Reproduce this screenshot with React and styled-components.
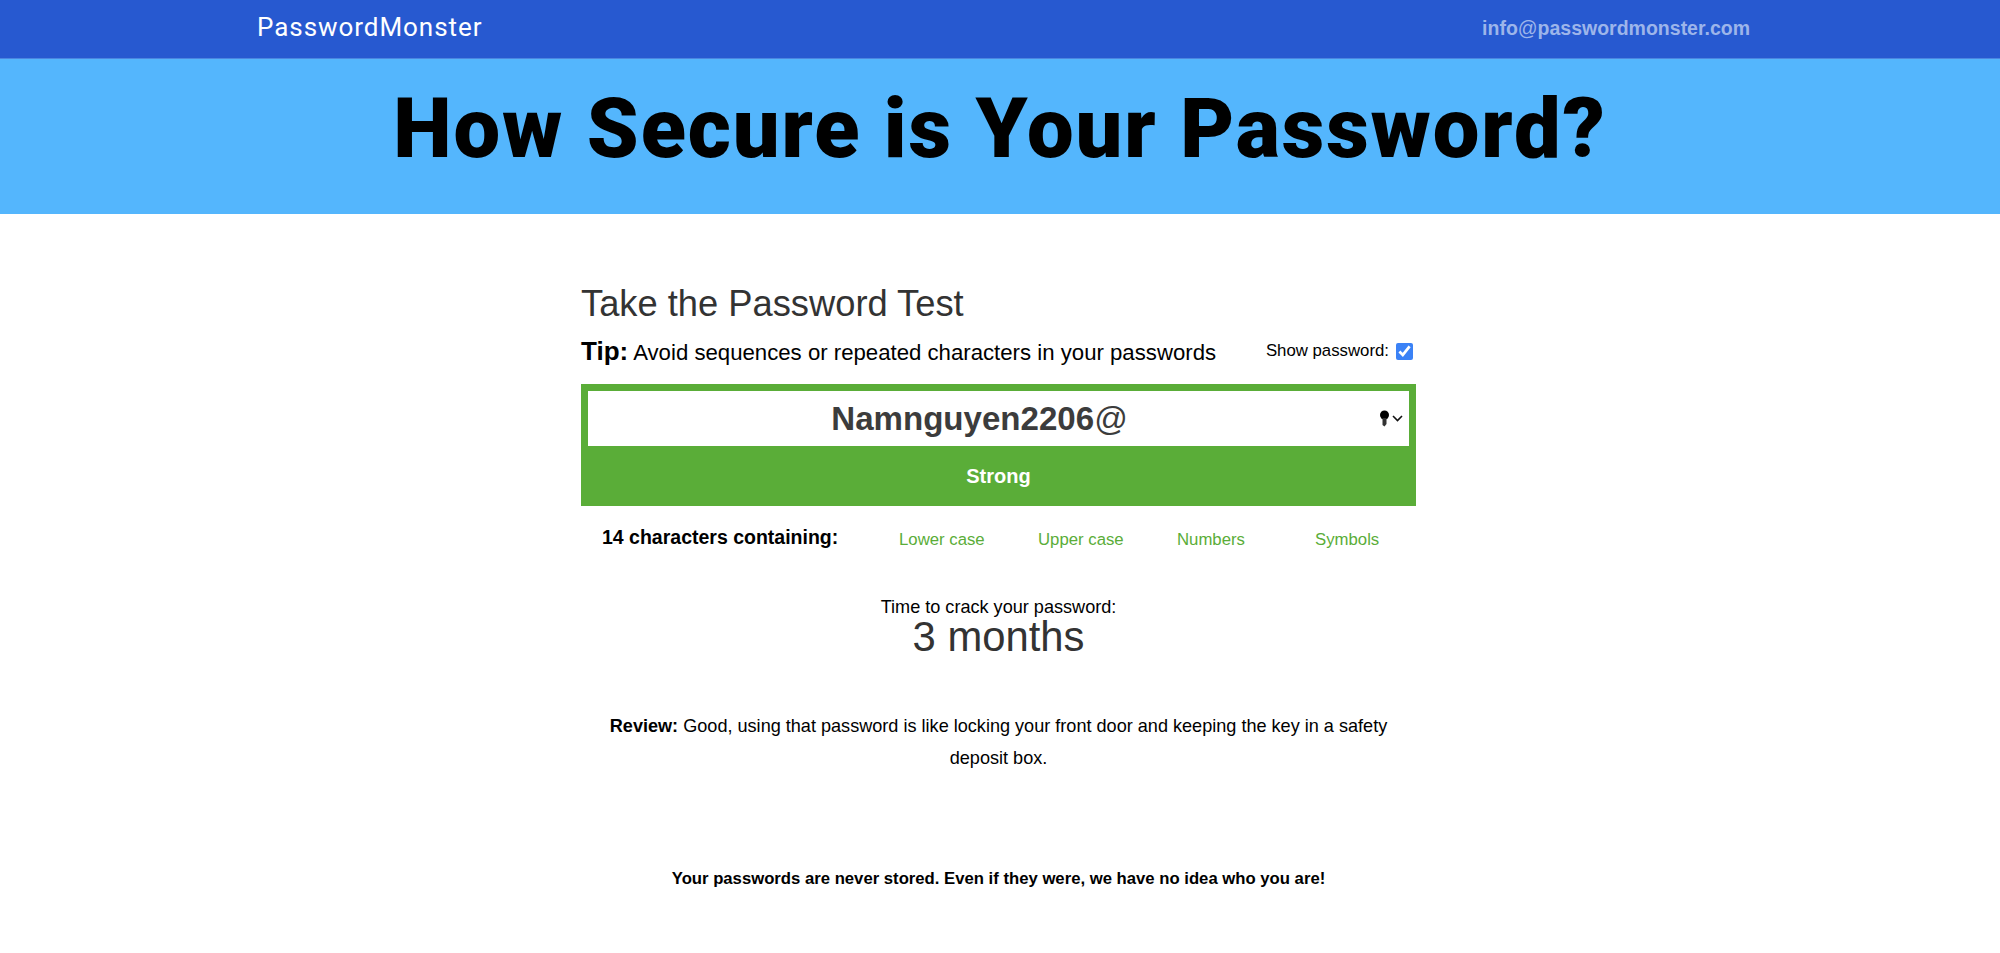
import React from "react";
import styled, { createGlobalStyle } from "styled-components";

const GlobalStyle = createGlobalStyle`
  html, body {
    margin: 0;
    background: #fff;
    font-family: "Liberation Sans", Arial, sans-serif;
  }
`;

const TopBar = styled.header`
  height: 54px;
  background: #2759d0;
  border-bottom: 1px solid #4b86e0;
  display: flex;
  align-items: center;
  justify-content: space-between;
  padding: 0 250px 4px 257px;
`;

const Logo = styled.a`
  font-family: Roboto, sans-serif;
  font-size: 26px;
  font-weight: 400;
  letter-spacing: 0.95px;
  color: #fff;
`;

const Mail = styled.a`
  margin-top: 3px;
  font-size: 19.5px;
  font-weight: 700;
  color: #9db5ea;
`;

const Thin = styled.span`
  font-weight: 400;
`;

const Hero = styled.div`
  height: 155px;
  background: #54b6fd;
  display: flex;
  align-items: center;
  justify-content: center;
`;

const Title = styled.h1`
  margin: 0 0 16px;
  font-family: Roboto, sans-serif;
  font-size: 83px;
  font-weight: 900;
  letter-spacing: 1.9px;
  color: #000;
`;

const Main = styled.main`
  width: 835px;
  margin: 0 auto 0 581px;
`;

const Heading = styled.h2`
  margin: 69px 0 0;
  font-size: 36.3px;
  line-height: 42px;
  font-weight: 400;
  color: #333;
`;

const TipRow = styled.div`
  margin-top: 8px;
  height: 36px;
  display: flex;
  align-items: center;
  justify-content: space-between;
  padding-right: 3px;
`;

const Tip = styled.div`
  font-size: 22.2px;
  color: #000;
  b {
    font-size: 26px;
  }
`;

const Show = styled.label`
  display: flex;
  align-items: center;
  gap: 7px;
  font-size: 16.8px;
  color: #000;
`;

const Check = styled.input`
  width: 17px;
  height: 17px;
  margin: 0;
  accent-color: #3b82f6;
`;

const Meter = styled.div`
  margin-top: 15px;
  background: #5aad38;
  padding: 7px 7px 0;
`;

const Field = styled.div`
  position: relative;
  height: 55px;
  padding-right: 38px;
  background: #fff;
  display: flex;
  align-items: center;
  justify-content: center;
  font-size: 33.1px;
  font-weight: 700;
  color: #3c3c3c;
`;

const Manager = styled.span`
  position: absolute;
  right: 6px;
  top: 19px;
  display: flex;
  align-items: center;
  gap: 2px;
`;

const Strength = styled.div`
  height: 60px;
  display: flex;
  align-items: center;
  justify-content: center;
  font-size: 20px;
  font-weight: 700;
  color: #fff;
`;

const Stats = styled.div`
  display: flex;
  align-items: center;
  height: 66px;
  padding-left: 21px;
`;

const Count = styled.b`
  width: 297px;
  margin-top: -4px;
  font-size: 19.5px;
  color: #000;
`;

const Kind = styled.span`
  width: ${(p) => p.$w}px;
  padding-top: 1px;
  font-size: 16.75px;
  color: #5aad38;
`;

const Crack = styled.div`
  margin-top: 24px;
  text-align: center;
  font-size: 18.1px;
  line-height: 22px;
  color: #000;
`;

const CrackTime = styled.div`
  font-size: 41.8px;
  line-height: 38px;
  color: #333;
`;

const Review = styled.p`
  margin: 54px 0 0;
  padding: 0 20px;
  text-align: center;
  font-size: 18.1px;
  line-height: 32px;
  color: #000;
`;

const Note = styled.p`
  margin: 95px 0 0;
  text-align: center;
  font-size: 16.7px;
  font-weight: 700;
  color: #000;
`;

function KeyIcon() {
  return (
    <svg width="11" height="17" viewBox="0 0 11 17">
      <circle cx="5.5" cy="5" r="4.5" fill="#000" />
      <path d="M3.5 8h4v6l-2 2.5L3.5 15z" fill="#333" />
    </svg>
  );
}

function Chevron() {
  return (
    <svg width="11" height="7" viewBox="0 0 11 7">
      <path d="M1 1l4.5 4.5L10 1" fill="none" stroke="#111" strokeWidth="1.6" />
    </svg>
  );
}

export default function App() {
  return (
    <>
      <GlobalStyle />
      <TopBar>
        <Logo>PasswordMonster</Logo>
        <Mail>info<Thin>@</Thin>passwordmonster.com</Mail>
      </TopBar>
      <Hero>
        <Title>How Secure is Your Password?</Title>
      </Hero>
      <Main>
        <Heading>Take the Password Test</Heading>
        <TipRow>
          <Tip>
            <b>Tip:</b> Avoid sequences or repeated characters in your passwords
          </Tip>
          <Show>
            Show password:
            <Check type="checkbox" defaultChecked />
          </Show>
        </TipRow>
        <Meter>
          <Field>
            <span>Namnguyen2206<Thin>@</Thin></span>
            <Manager>
              <KeyIcon />
              <Chevron />
            </Manager>
          </Field>
          <Strength>Strong</Strength>
        </Meter>
        <Stats>
          <Count>14 characters containing:</Count>
          <Kind $w={139}>Lower case</Kind>
          <Kind $w={139}>Upper case</Kind>
          <Kind $w={138}>Numbers</Kind>
          <Kind $w={100}>Symbols</Kind>
        </Stats>
        <Crack>
          Time to crack your password:
          <CrackTime>3 months</CrackTime>
        </Crack>
        <Review>
          <b>Review:</b> Good, using that password is like locking your front door and keeping the key in a safety deposit box.
        </Review>
        <Note>Your passwords are never stored. Even if they were, we have no idea who you are!</Note>
      </Main>
    </>
  );
}
